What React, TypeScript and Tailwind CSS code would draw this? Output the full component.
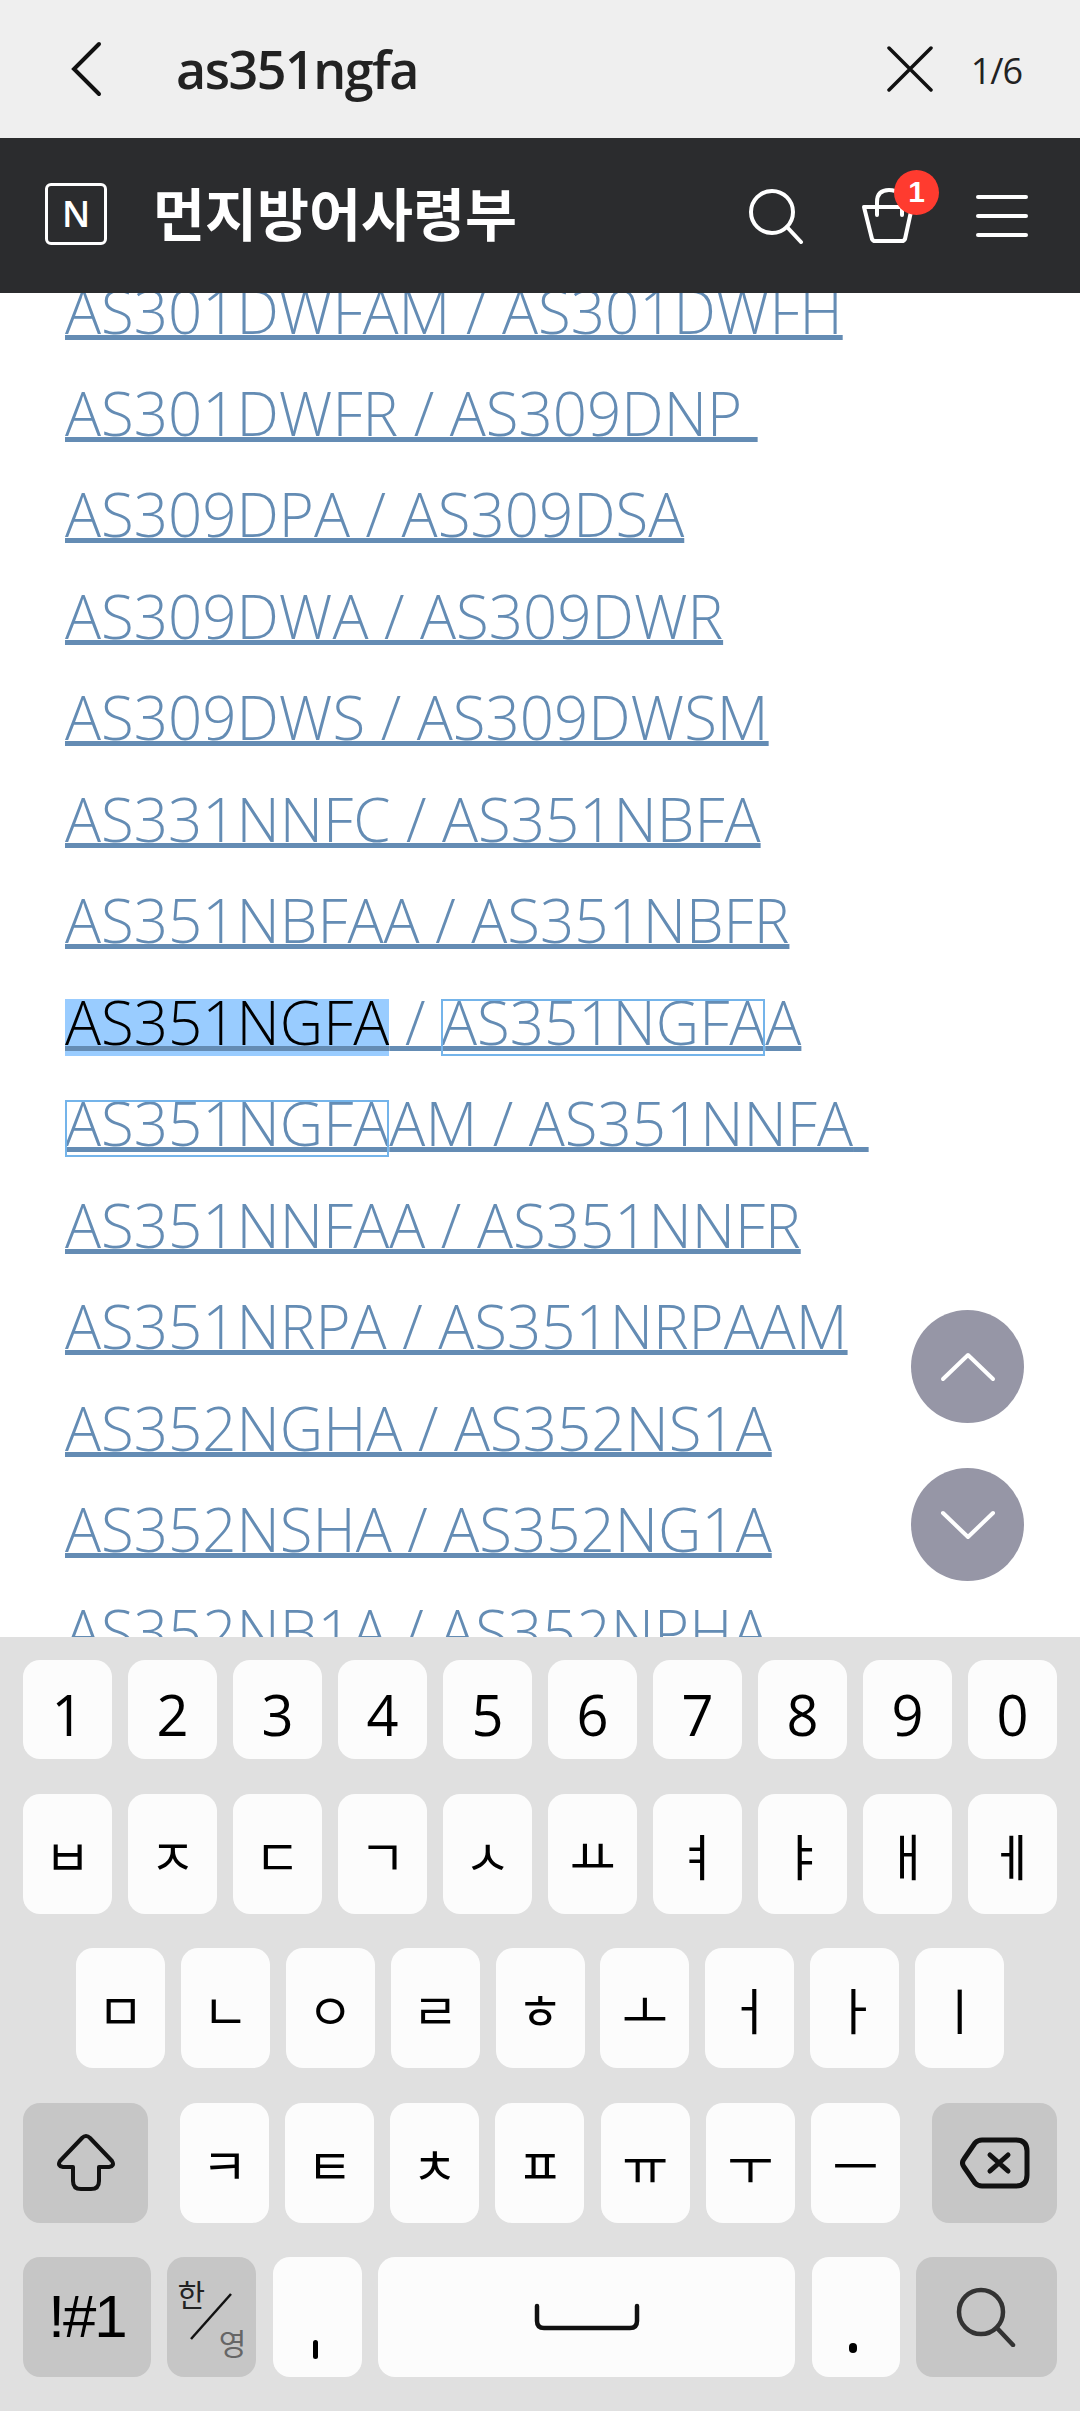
import React from "react";

function Hit({ children, active }: { children: string; active?: boolean }) {
  return (
    <span className="relative">
      <span
        className={
          active
            ? "absolute left-0 right-0 top-[18px] h-[57px] bg-[#99ccff] -z-10"
            : "absolute left-0 right-0 top-[18px] h-[57px] border-2 border-[#74b4ea]"
        }
      />
      <span className={active ? "text-black" : ""}>{children}</span>
    </span>
  );
}

const lines: React.ReactNode[] = [
  "AS301DWFAM / AS301DWFH",
  "AS301DWFR / AS309DNP ",
  "AS309DPA / AS309DSA",
  "AS309DWA / AS309DWR",
  "AS309DWS / AS309DWSM",
  "AS331NNFC / AS351NBFA",
  "AS351NBFAA / AS351NBFR",
  <>
    <Hit active>AS351NGFA</Hit> / <Hit>AS351NGFA</Hit>A
  </>,
  <>
    <Hit>AS351NGFA</Hit>AM / AS351NNFA{" "}
  </>,
  "AS351NNFAA / AS351NNFR",
  "AS351NRPA / AS351NRPAAM",
  "AS352NGHA / AS352NS1A",
  "AS352NSHA / AS352NG1A",
  "AS352NB1A / AS352NPHA",
];

function Key({ children, className = "" }: { children?: React.ReactNode; className?: string }) {
  return (
    <div className={"flex items-center justify-center rounded-[17px] bg-[#fcfcfc] text-black " + className}>
      {children}
    </div>
  );
}

const jamo = "font-['Noto_Sans_CJK_KR',sans-serif] text-[50px] leading-none";

function Row({ keys }: { keys: string[] }) {
  return (
    <>
      {keys.map((k) => (
        <Key key={k} className={"w-[89px] " + jamo}>
          {k}
        </Key>
      ))}
    </>
  );
}

export default function App() {
  return (
    <div className="relative flex h-[2411px] w-[1080px] flex-col overflow-hidden bg-white font-['Open_Sans',sans-serif]">
      {/* find bar */}
      <div className="flex h-[138px] items-center bg-[#efefef] text-[#222]">
        <svg className="ml-[70px] h-[56px] w-[34px]" viewBox="0 0 34 56" fill="none" stroke="#111" strokeWidth="4" strokeLinecap="round">
          <path d="M29 3 L4 28 L29 53" />
        </svg>
        <div className="ml-[72px] flex-1 text-[52px] font-semibold leading-none tracking-[-1.5px]">as351ngfa</div>
        <svg className="h-[46px] w-[46px]" viewBox="0 0 46 46" fill="none" stroke="#111" strokeWidth="3.5" strokeLinecap="round">
          <path d="M2 2 L44 44 M44 2 L2 44" />
        </svg>
        <div className="ml-[38px] mr-[58px] pt-[4px] text-[36px] leading-none tracking-[-1px]">1/6</div>
      </div>

      {/* site header */}
      <div className="flex h-[155px] items-center bg-[#2b2c2e] text-white">
        <div className="mb-[3px] ml-[45px] flex h-[62px] w-[62px] items-center justify-center rounded-[6px] border-[3px] border-white text-[36px] font-semibold leading-none">
          N
        </div>
        <div className="ml-[46px] flex-1 pb-[8px] text-[56.5px] font-bold leading-none font-['Noto_Sans_CJK_KR',sans-serif]">먼지방어사령부</div>
        <svg className="mr-[56px] h-[56px] w-[56px]" viewBox="0 0 56 56" fill="none" stroke="#fff" strokeWidth="4" strokeLinecap="round">
          <circle cx="24" cy="24" r="21" />
          <path d="M39 39 L53 54" />
        </svg>
        <div className="relative mr-[60px] h-[56px] w-[56px]">
          <svg className="h-[56px] w-[56px]" viewBox="0 0 56 56" fill="none" stroke="#fff" strokeWidth="4" strokeLinecap="round" strokeLinejoin="round">
            <path d="M4 19 H52 L45 51 Q44 53 42 53 H15 Q13 53 12 51 Z" />
            <path d="M17 27 V14 Q17 2 29 2 Q42 2 42 14 V27" />
          </svg>
          <div className="absolute right-[-23px] top-[-18px] flex h-[45px] w-[45px] items-center justify-center rounded-full bg-[#ff3b2f] text-[30px] font-bold leading-none font-['Liberation_Sans',sans-serif]">
            1
          </div>
        </div>
        <div className="mr-[52px] flex w-[52px] flex-col gap-[15px]">
          <div className="h-[4px] rounded-full bg-white" />
          <div className="h-[4px] rounded-full bg-white" />
          <div className="h-[4px] rounded-full bg-white" />
        </div>
      </div>

      {/* page content */}
      <div className="relative isolate min-h-0 flex-1 overflow-hidden bg-white">
        <div className="mt-[-32px] pl-[65px] text-[60px] font-light text-[#648cb4]">
          {lines.map((l, i) => (
            <div key={i} className="h-[101.5px] whitespace-pre leading-[101.5px]">
              <span className="underline decoration-[#648cb4] decoration-[5px] underline-offset-[1px]">{l}</span>
            </div>
          ))}
        </div>
        <div className="absolute left-[911px] top-[1017px] flex h-[113px] w-[113px] items-center justify-center rounded-full bg-[#9696a6]">
          <svg className="h-[30px] w-[56px]" viewBox="0 0 56 30" fill="none" stroke="#fff" strokeWidth="4" strokeLinecap="round" strokeLinejoin="round">
            <path d="M3 27 L28 3 L53 27" />
          </svg>
        </div>
        <div className="absolute left-[911px] top-[1175px] flex h-[113px] w-[113px] items-center justify-center rounded-full bg-[#9696a6]">
          <svg className="h-[30px] w-[56px]" viewBox="0 0 56 30" fill="none" stroke="#fff" strokeWidth="4" strokeLinecap="round" strokeLinejoin="round">
            <path d="M3 3 L28 27 L53 3" />
          </svg>
        </div>
      </div>

      {/* keyboard */}
      <div className="flex h-[774px] flex-col bg-[#e0e0e0] px-[23px] pt-[23px]">
        <div className="flex h-[99px] justify-between">
          {"1234567890".split("").map((k) => (
            <Key key={k} className="w-[89px] pt-[8px] text-[56px] leading-none">{k}</Key>
          ))}
        </div>
        <div className="mt-[35px] flex h-[120px] justify-between">
          <Row keys={["ㅂ", "ㅈ", "ㄷ", "ㄱ", "ㅅ", "ㅛ", "ㅕ", "ㅑ", "ㅐ", "ㅔ"]} />
        </div>
        <div className="mt-[34px] flex h-[120px] justify-between px-[53px]">
          <Row keys={["ㅁ", "ㄴ", "ㅇ", "ㄹ", "ㅎ", "ㅗ", "ㅓ", "ㅏ", "ㅣ"]} />
        </div>
        <div className="mt-[35px] flex h-[120px] justify-between">
          <Key className="w-[125px] !bg-[#c6c6c6]">
            <svg className="h-[58px] w-[58px]" viewBox="0 0 58 58" fill="none" stroke="#111" strokeWidth="4" strokeLinejoin="round">
              <path d="M25 4 Q29 0 33 4 L55 27 Q58 32 52 33 H42 V47 Q42 55 34 55 H24 Q16 55 16 47 V33 H6 Q0 32 3 27 Z" />
            </svg>
          </Key>
          <div className="flex w-[720px] justify-between">
            <Row keys={["ㅋ", "ㅌ", "ㅊ", "ㅍ", "ㅠ", "ㅜ", "ㅡ"]} />
          </div>
          <Key className="w-[125px] !bg-[#c6c6c6]">
            <svg className="h-[52px] w-[70px]" viewBox="0 0 70 52" fill="none" stroke="#111" strokeWidth="5" strokeLinejoin="round" strokeLinecap="round">
              <path d="M22 3 H56 Q67 3 67 14 V38 Q67 49 56 49 H22 Q18 49 15 46 L4 30 Q1 26 4 22 L15 6 Q18 3 22 3 Z" />
              <path d="M30 18 L48 34 M48 18 L30 34" />
            </svg>
          </Key>
        </div>
        <div className="mt-[34px] flex h-[120px] justify-between">
          <Key className="w-[128px] !bg-[#c6c6c6] text-[60px] tracking-[-2px] leading-none font-['Liberation_Sans',sans-serif]">!#1</Key>
          <Key className="relative w-[89px] !bg-[#c6c6c6] font-['Noto_Sans_CJK_KR',sans-serif] leading-none">
            <span className="absolute left-[10px] top-[21px] text-[30px] text-[#222]">한</span>
            <svg className="absolute left-[23px] top-[36px] h-[47px] w-[42px]" viewBox="0 0 42 47" fill="none" stroke="#111" strokeWidth="2.5">
              <path d="M1 46 L41 1" />
            </svg>
            <span className="absolute right-[10px] bottom-[20px] text-[30px] text-[#666]">영</span>
          </Key>
          <Key className="w-[89px] items-end pb-[18px]">
            <span className="mr-[3px] block h-[19px] w-[5px] rounded-full bg-black" />
          </Key>
          <Key className="w-[417px]">
            <svg className="h-[28px] w-[106px]" viewBox="0 0 106 28" fill="none" stroke="#111" strokeWidth="4.5" strokeLinecap="round" strokeLinejoin="round">
              <path d="M3 3 V18 Q3 25 10 25 H96 Q103 25 103 18 V3" />
            </svg>
          </Key>
          <Key className="w-[88px] items-end pb-[24px]">
            <span className="mr-[6px] block h-[10px] w-[8px] rounded-full bg-black" />
          </Key>
          <Key className="w-[141px] !bg-[#c6c6c6]">
            <svg className="h-[60px] w-[60px]" viewBox="0 0 60 60" fill="none" stroke="#333" strokeWidth="4.5" strokeLinecap="round">
              <circle cx="25" cy="25" r="22" />
              <path d="M41 41 L57 58" />
            </svg>
          </Key>
        </div>
      </div>
    </div>
  );
}
